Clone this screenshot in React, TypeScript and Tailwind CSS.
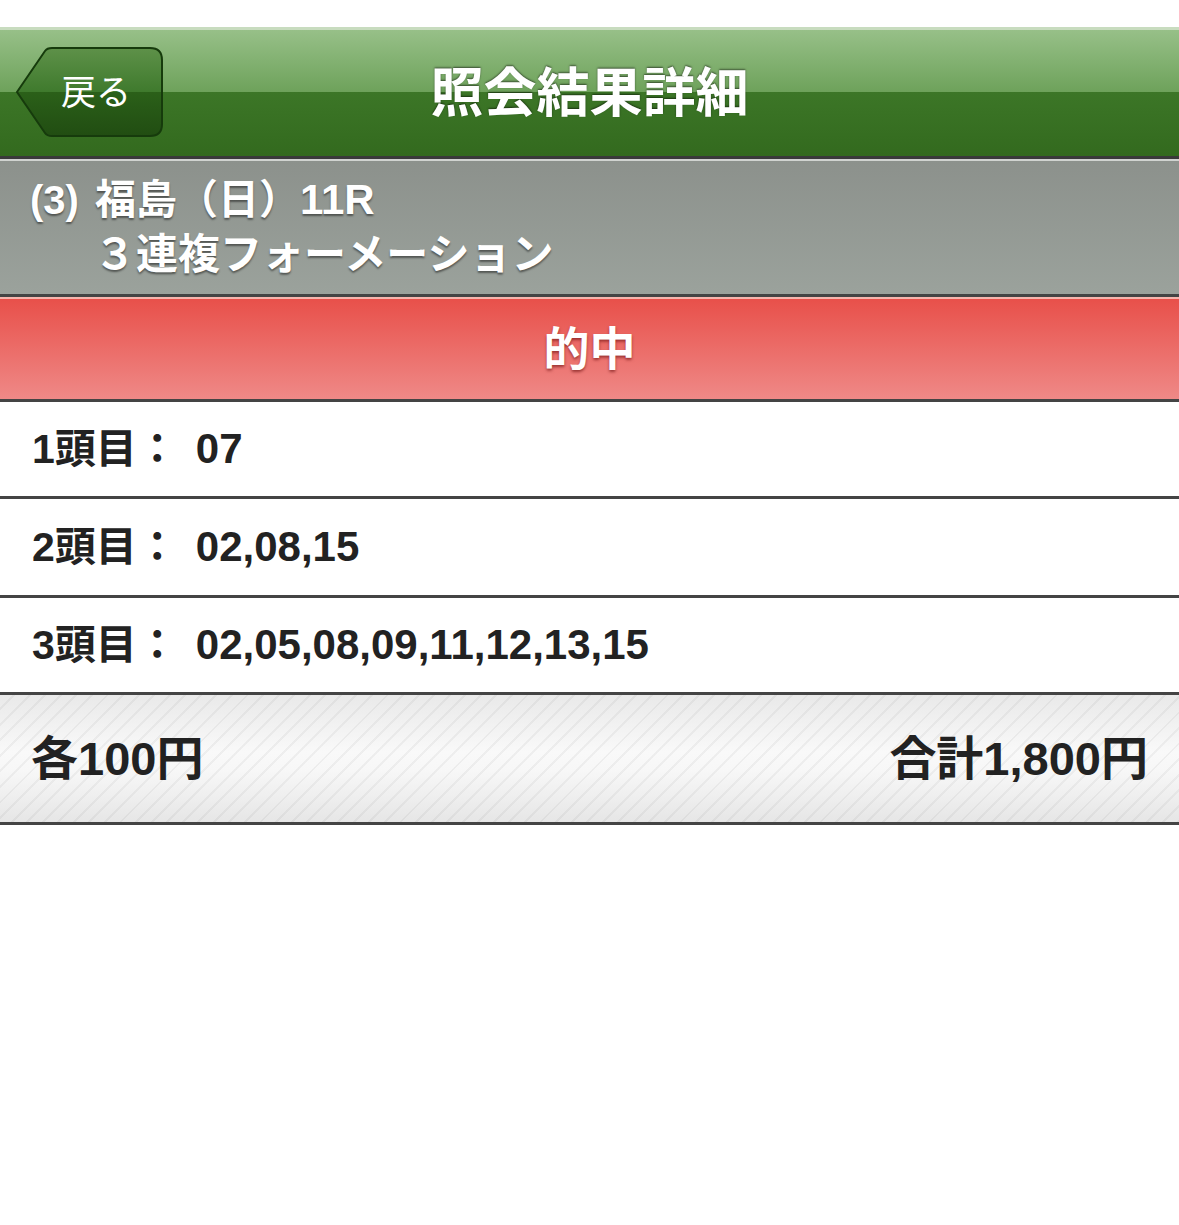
const font = "font-['Liberation_Sans','Noto_Sans_CJK_JP',sans-serif]";

const rows = [
  { label: "1頭目", value: "07", h: "h-[97px]" },
  { label: "2頭目", value: "02,08,15", h: "h-[99px]" },
  { label: "3頭目", value: "02,05,08,09,11,12,13,15", h: "h-[97px]" },
];

function BackButton() {
  return (
    <button className="absolute left-[15px] top-[17px] w-[148px] h-[90px] flex items-center justify-center">
      <svg className="absolute inset-0" width="148" height="90" viewBox="0 0 148 90">
        <defs>
          <linearGradient id="bb" x1="0" y1="0" x2="0" y2="1">
            <stop offset="0" stopColor="#5e9149" />
            <stop offset="0.5" stopColor="#3f7a2d" />
            <stop offset="0.5" stopColor="#2b6019" />
            <stop offset="1" stopColor="#214d12" />
          </linearGradient>
        </defs>
        <path
          d="M2,45 L30,4 Q32,1 37,1 L135,1 Q147,1 147,13 L147,77 Q147,89 135,89 L37,89 Q32,89 30,86 Z"
          fill="url(#bb)"
          stroke="#163b0c"
          strokeWidth="2"
        />
      </svg>
      <span className={`relative ml-[14px] text-[35px] leading-none text-white ${font}`}>戻る</span>
    </button>
  );
}

export default function App() {
  return (
    <div className={`w-[1179px] min-h-[1225px] bg-white ${font}`}>
      <div className="h-[27px] bg-white" />

      {/* Header */}
      <div className="relative h-[132px] border-t-[3px] border-b-[3px] border-t-[#c8dcbf] border-b-[#3a3a3a] bg-[linear-gradient(to_bottom,#97c088_0%,#6ea25b_49%,#3c7627_49%,#336a1e_100%)] flex items-center justify-center">
        <BackButton />
        <h1 className="text-[53px] font-bold leading-none text-white [text-shadow:0_-1px_2px_rgba(0,0,0,0.55)]">
          照会結果詳細
        </h1>
      </div>

      {/* Race info */}
      <div className="h-[138px] border-t-2 border-b-[3px] border-t-[#d0d3d0] border-b-[#444] bg-[linear-gradient(to_bottom,#8c918c,#9ba29c)] pt-[11px] pl-[30px] text-white font-bold [text-shadow:0_2px_2px_rgba(0,0,0,0.45)]">
        <div className="h-[55px] flex items-center text-[41px] leading-none">
          <span className="text-[40px]">(3)</span>
          <span className="ml-[16px]">福島（日）<span className="text-[42px]">11R</span></span>
        </div>
        <div className="h-[55px] flex items-center pl-[64px] text-[42px] leading-none">
          ３連複フォーメーション
        </div>
      </div>

      {/* Result */}
      <div className="h-[105px] border-t-2 border-b-[3px] border-t-[#f5b6ae] border-b-[#444] bg-[linear-gradient(to_bottom,#e8504a,#ef8987)] flex items-center justify-center">
        <span className="text-[46px] font-bold leading-none text-white [text-shadow:0_2px_3px_rgba(90,0,0,0.55)]">
          的中
        </span>
      </div>

      {/* Selections */}
      {rows.map((r) => (
        <div
          key={r.label}
          className={`${r.h} border-b-[3px] border-b-[#444] flex items-center pl-[32px] font-bold leading-none text-[#222]`}
        >
          <span className="text-[41px]">{r.label}：</span>
          <span className="ml-[18px] text-[42px]">{r.value}</span>
        </div>
      ))}

      {/* Footer */}
      <div className="h-[130px] border-b-[3px] border-b-[#444] bg-[repeating-linear-gradient(135deg,rgba(0,0,0,0)_0px,rgba(0,0,0,0)_9px,rgba(0,0,0,0.045)_9px,rgba(0,0,0,0.045)_11px),linear-gradient(to_bottom,#e9e9e9,#f9f9f9_45%,#f7f7f7_60%,#e6e6e6)] flex items-center justify-between px-[31px] text-[47px] font-bold leading-none text-[#222]">
        <span>各100円</span>
        <span>合計1,800円</span>
      </div>
    </div>
  );
}
